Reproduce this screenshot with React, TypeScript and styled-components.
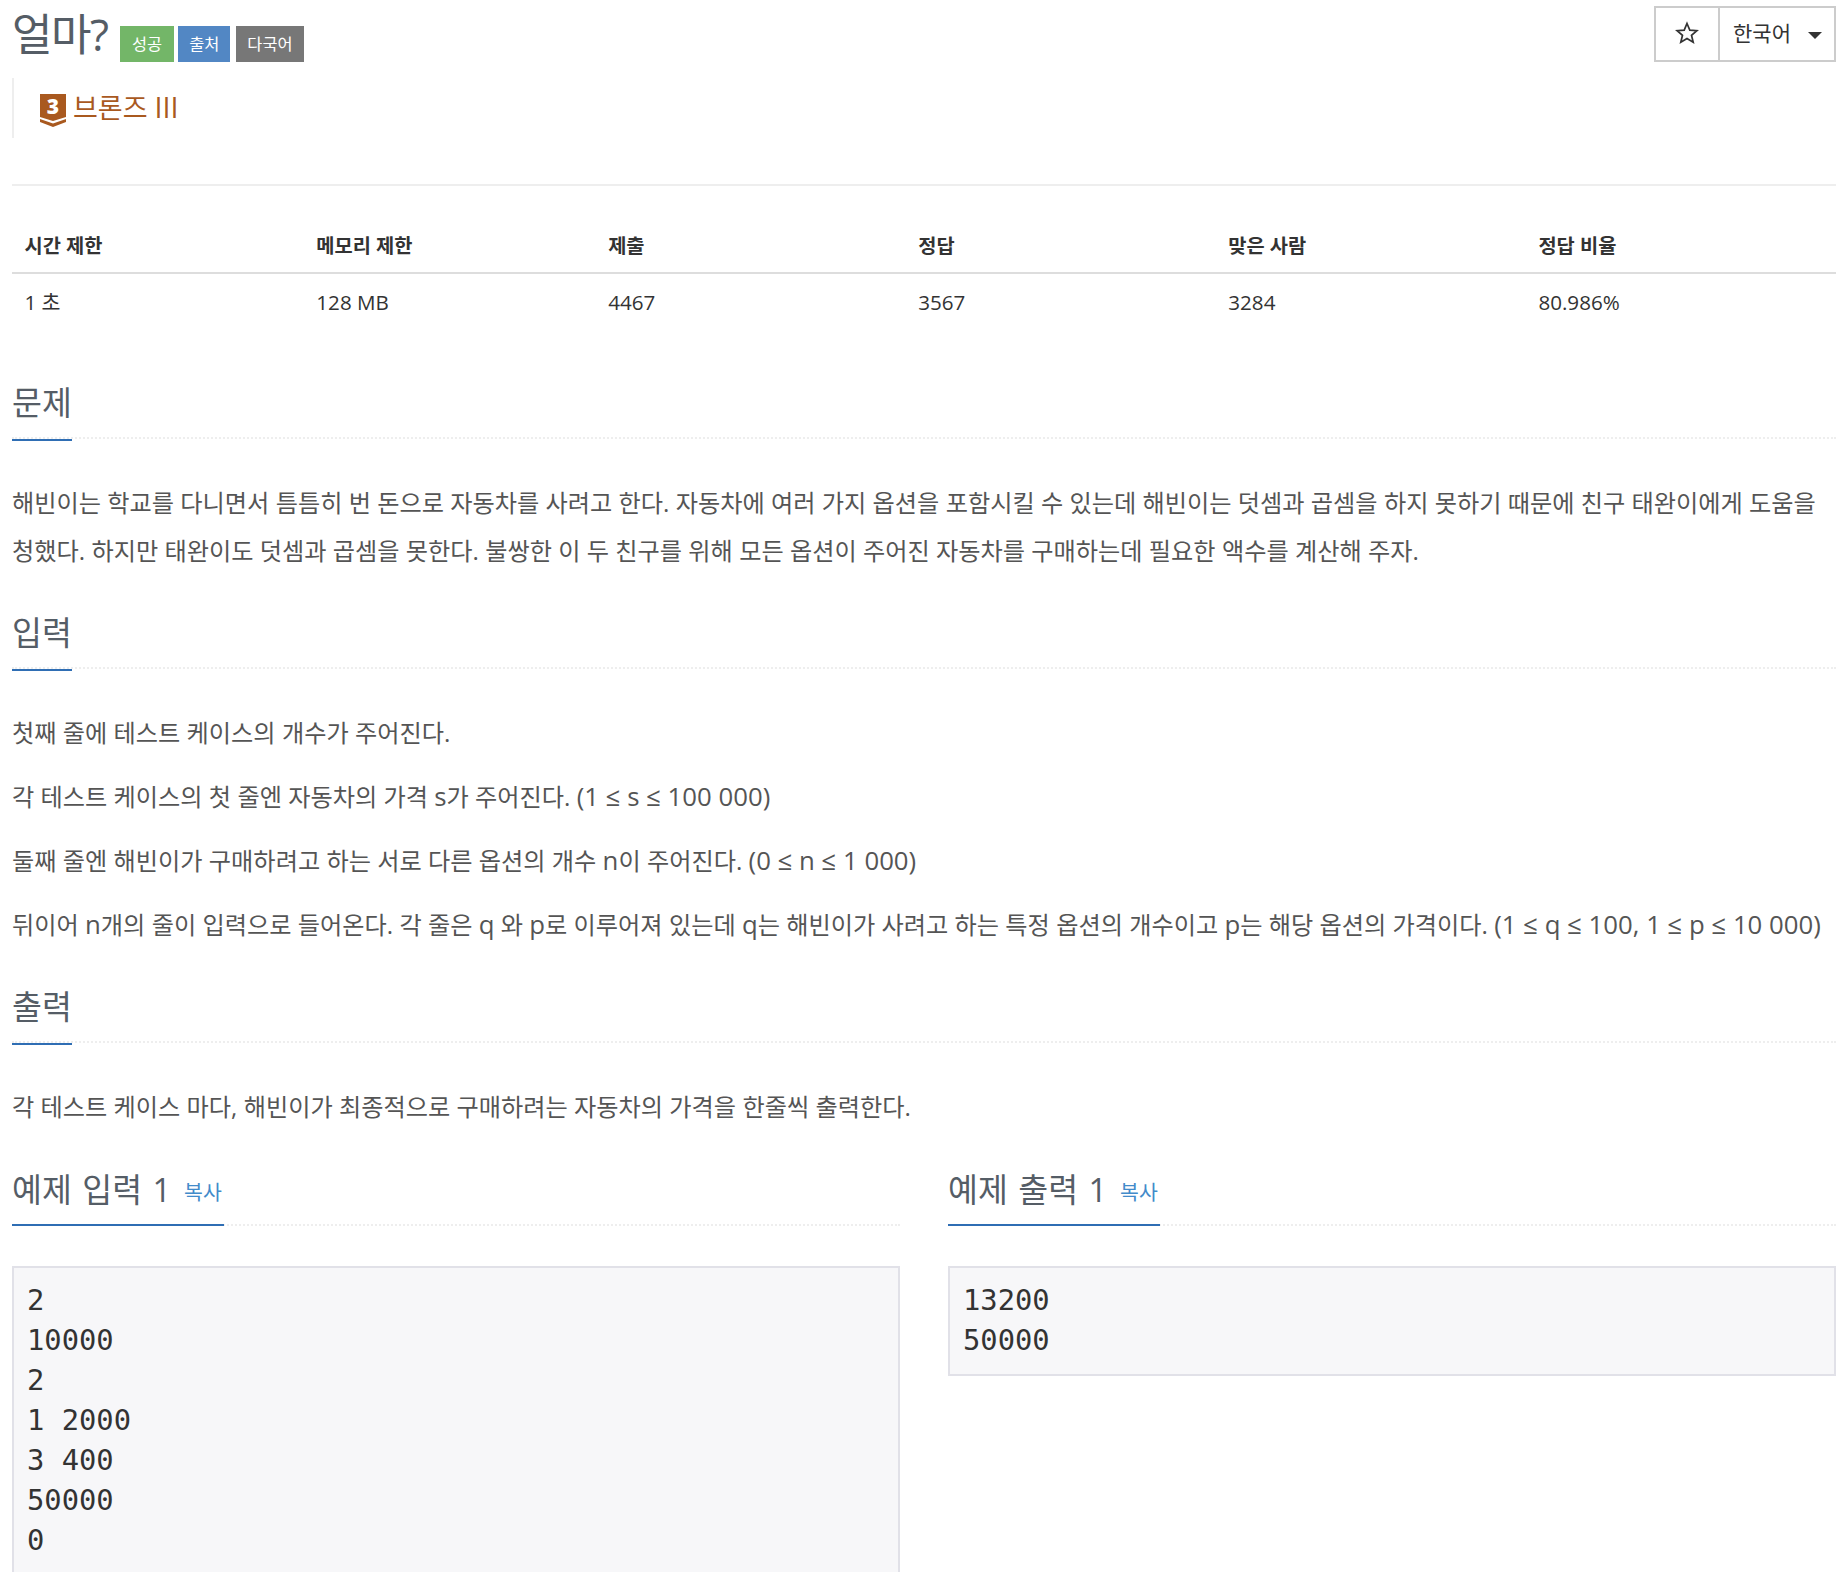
import React from "react";
import styled, { createGlobalStyle } from "styled-components";

const SANS = `"Open Sans", "Noto Sans CJK KR", sans-serif`;

const Global = createGlobalStyle`
  html, body { margin: 0; padding: 0; background: #fff; overflow: hidden; height: 1572px; }
  body { font-family: ${SANS}; color: #333; }
  * { box-sizing: border-box; }
`;

const Page = styled.div`
  width: 1848px;
  height: 1572px;
  overflow: hidden;
  padding: 0 12px;
`;

const Header = styled.header`
  display: flex;
  justify-content: space-between;
  align-items: flex-start;
  height: 78px;
`;

const TitleRow = styled.div`
  display: flex;
  align-items: flex-start;
`;

const Title = styled.h1`
  margin: 6px 0 0;
  width: 97px;
  font: 400 44px/56px ${SANS};
  color: #555d66;
  letter-spacing: -1.500px;
  white-space: nowrap;
`;

const Labels = styled.div`
  display: flex;
  gap: 4px;
  margin: 26px 0 0 11px;
`;

const Label = styled.span<{ $bg: string }>`
  height: 36px;
  padding: 0 11px;
  background: ${(p) => p.$bg};
  color: #fff;
  font-size: 16.400px;
  line-height: 36px;
  &:first-child { padding: 0 12px; }
  &:last-child { margin-left: 2px; }
`;

const ButtonGroup = styled.div`
  display: flex;
  height: 56px;
  margin-top: 6px;
  border: 2px solid #ccc;
`;

const StarButton = styled.div`
  width: 64px;
  display: flex;
  align-items: center;
  justify-content: center;
  padding-bottom: 2px;
  border-right: 2px solid #ccc;
  color: #333;
`;

const LangButton = styled.div`
  width: 114px;
  display: flex;
  align-items: center;
  justify-content: space-between;
  padding: 0 12px 4px 13px;
  font-size: 21px;
  color: #333;
  white-space: nowrap;
`;

const Caret = styled.span`
  width: 0;
  height: 0;
  border-left: 7px solid transparent;
  border-right: 7px solid transparent;
  border-top: 7px solid #333;
  margin-top: 7px;
`;

const Tier = styled.div`
  display: flex;
  align-items: flex-start;
  height: 60px;
  padding: 16px 0 0 26px;
  border-left: 2px solid #eee;
  gap: 7px;
`;

const TierName = styled.span`
  color: #a9591f;
  font-size: 27px;
  line-height: 27px;
  height: 30px;
  display: block;
  white-space: nowrap;
`;

const Rule = styled.hr`
  margin: 46px 0 0;
  border: 0;
  border-top: 2px solid #eee;
`;

const Stats = styled.div`
  display: grid;
  grid-template-columns: 16% 16% 17% 17% 17% 17%;
  margin-top: 38px;
`;

const StatHead = styled.div`
  padding: 0 12.500px;
  height: 50px;
  font-size: 19.800px;
  font-weight: 700;
  line-height: 44px;
  color: #333;
  border-bottom: 2px solid #ddd;
`;

const StatCell = styled.div`
  padding: 0 12.500px;
  height: 58px;
  font-size: 20.600px;
  line-height: 56px;
  color: #333;
`;

const Section = styled.section<{ $top: number }>`
  margin-top: ${(p) => p.$top}px;
`;

const Heading = styled.div`
  border-bottom: 2px dotted #eee;
  height: 59px;
  display: flex;
`;

const HeadingText = styled.h2<{ $drop?: boolean }>`
  margin: 0 0 ${(p) => (p.$drop ? -4 : -2)}px;
  height: ${(p) => (p.$drop ? 61 : 59)}px;
  font: 400 32.500px/46px ${SANS};
  color: #555d66;
  border-bottom: 2px solid #2f6eb4;
  white-space: nowrap;
  word-spacing: 2px;
`;

const Copy = styled.span`
  margin-left: 13px;
  padding-right: 2px;
  font-size: 20.500px;
  color: #428bca;
  vertical-align: 2px;
`;

const Body = styled.div`
  margin-top: 40px;
`;

const Para = styled.p`
  margin: 0 0 16px;
  font-size: 24.200px;
  line-height: 48px;
  color: #555;
  white-space: nowrap;
  &:last-child { margin-bottom: 0; }
`;

const WrapPara = styled(Para)`
  white-space: normal;
`;

const Latin = styled.span`
  font-size: 1.065em;
  line-height: 0;
`;

const Samples = styled.div`
  display: grid;
  grid-template-columns: 888px 888px;
  gap: 48px;
  margin-top: 36px;
  align-items: start;
`;

const Sample = styled.div``;

const Pre = styled.pre`
  margin: 40px 0 0;
  padding: 12px 13px 14px;
  border: 2px solid #e1e1e8;
  background: #f7f7f9;
  font: 400 28.800px/40px "DejaVu Sans Mono", monospace;
  color: #333;
`;

const BronzeSvg = styled.svg`
  width: 26px;
  height: 34px;
  flex: none;
  overflow: visible;
`;

const StarSvg = styled.svg`
  width: 24px;
  height: 24px;
`;

const stats = [
  ["시간 제한", "1 초"],
  ["메모리 제한", "128 MB"],
  ["제출", "4467"],
  ["정답", "3567"],
  ["맞은 사람", "3284"],
  ["정답 비율", "80.986%"],
];

export default function App() {
  return (
    <Page>
      <Global />
      <Header>
        <TitleRow>
          <Title>얼마?</Title>
          <Labels>
            <Label $bg="#73b668">성공</Label>
            <Label $bg="#5287c4">출처</Label>
            <Label $bg="#777777">다국어</Label>
          </Labels>
        </TitleRow>
        <ButtonGroup>
          <StarButton>
            <StarSvg viewBox="0 0 24 24">
              <path
                d="M12 2.500l2.800 6.600 7.100.6-5.400 4.600 1.700 7-6.200-3.700-6.200 3.700 1.700-7L2.100 9.700l7.100-.6z"
                fill="none"
                stroke="#333"
                strokeWidth="1.700"
              />
            </StarSvg>
          </StarButton>
          <LangButton>
            한국어
            <Caret />
          </LangButton>
        </ButtonGroup>
      </Header>
      <Tier>
        <BronzeSvg viewBox="0 0 26 34">
          <path d="M0 0h26v23l-13 4-13-4z" fill="#a9591f" />
          <path d="M0 25l13 4.500 13-4.500v3l-13 5-13-5z" fill="#a9591f" />
          <text x="13" y="20" textAnchor="middle" fill="#fff" fontSize="21" fontWeight="800" fontFamily="Open Sans, sans-serif">
            3
          </text>
        </BronzeSvg>
        <TierName>
          브론즈 <Latin>III</Latin>
        </TierName>
      </Tier>
      <Rule />
      <Stats>
        {stats.map(([h]) => (
          <StatHead key={h}>{h}</StatHead>
        ))}
        {stats.map(([h, v]) => (
          <StatCell key={h}>{v}</StatCell>
        ))}
      </Stats>
      <Section $top={48}>
        <Heading>
          <HeadingText $drop>문제</HeadingText>
        </Heading>
        <Body>
          <WrapPara>
            해빈이는 학교를 다니면서 틈틈히 번 돈으로 자동차를 사려고 한다. 자동차에 여러 가지 옵션을 포함시킬 수 있는데 해빈이는 덧셈과 곱셈을 하지 못하기 때문에 친구 태완이에게 도움을 청했다. 하지만 태완이도 덧셈과 곱셈을 못한다. 불쌍한 이 두 친구를 위해 모든 옵션이 주어진 자동차를 구매하는데 필요한 액수를 계산해 주자.
          </WrapPara>
        </Body>
      </Section>
      <Section $top={35}>
        <Heading>
          <HeadingText $drop>입력</HeadingText>
        </Heading>
        <Body>
          <Para>첫째 줄에 테스트 케이스의 개수가 주어진다.</Para>
          <Para>
            각 테스트 케이스의 첫 줄엔 자동차의 가격 <Latin>s</Latin>가 주어진다. <Latin>(1 ≤ s ≤ 100 000)</Latin>
          </Para>
          <Para>
            둘째 줄엔 해빈이가 구매하려고 하는 서로 다른 옵션의 개수 <Latin>n</Latin>이 주어진다. <Latin>(0 ≤ n ≤ 1 000)</Latin>
          </Para>
          <Para>
            뒤이어 <Latin>n</Latin>개의 줄이 입력으로 들어온다. 각 줄은 <Latin>q</Latin> 와 <Latin>p</Latin>로 이루어져 있는데 <Latin>q</Latin>는 해빈이가 사려고 하는 특정 옵션의 개수이고 <Latin>p</Latin>는 해당 옵션의 가격이다. <Latin>(1 ≤ q ≤ 100, 1 ≤ p ≤ 10 000)</Latin>
          </Para>
        </Body>
      </Section>
      <Section $top={35}>
        <Heading>
          <HeadingText $drop>출력</HeadingText>
        </Heading>
        <Body>
          <Para>각 테스트 케이스 마다, 해빈이가 최종적으로 구매하려는 자동차의 가격을 한줄씩 출력한다.</Para>
        </Body>
      </Section>
      <Samples>
        <Sample>
          <Heading>
            <HeadingText>
              예제 입력 1<Copy>복사</Copy>
            </HeadingText>
          </Heading>
          <Pre>{"2\n10000\n2\n1 2000\n3 400\n50000\n0"}</Pre>
        </Sample>
        <Sample>
          <Heading>
            <HeadingText>
              예제 출력 1<Copy>복사</Copy>
            </HeadingText>
          </Heading>
          <Pre>{"13200\n50000"}</Pre>
        </Sample>
      </Samples>
    </Page>
  );
}
